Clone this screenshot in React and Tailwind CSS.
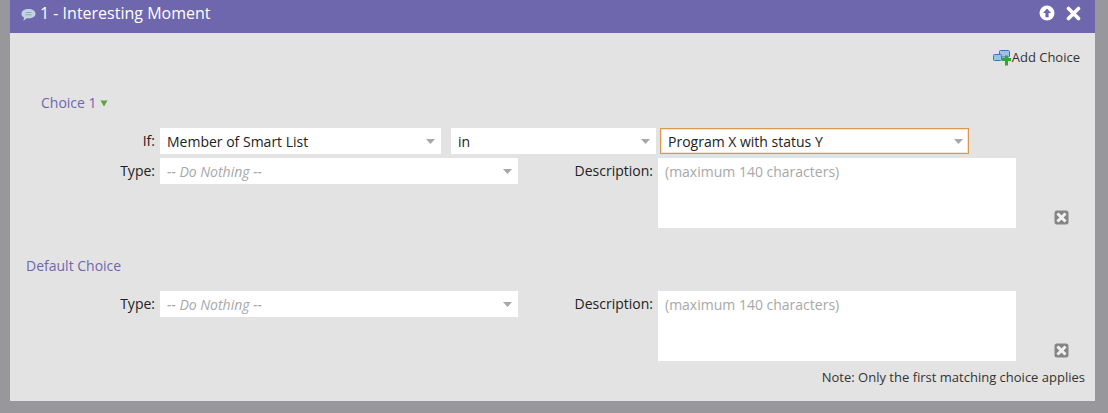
import React from "react";

const font = "font-['Open_Sans','Liberation_Sans',sans-serif]";

const Caret = () => (
  <svg width="9" height="5" viewBox="0 0 9 5" className="shrink-0">
    <path d="M0 0h9L4.500 5z" fill="#a8a8a8" />
  </svg>
);

const Select = ({ value, placeholder, className }) => (
  <div
    className={`flex h-[26px] items-center justify-between bg-white text-sm ${
      placeholder ? "italic text-[#a8a8a8]" : "text-[#222]"
    } ${className}`}
  >
    <span className="pt-[2px]">{value}</span>
    <Caret />
  </div>
);

const DeleteIcon = () => (
  <svg width="15" height="15" viewBox="0 0 15 15">
    <rect x="0.500" y="0.500" width="14" height="14" rx="2.500" fill="#858585" />
    <path
      d="M4.500 4.500l6 6m0-6l-6 6"
      stroke="#f2f2f2"
      strokeWidth="3"
      strokeLinecap="square"
    />
  </svg>
);

const TypeRow = () => (
  <div className="flex">
    <div className="w-[145px] text-right text-sm leading-[26px] text-[#222]">Type:</div>
    <Select
      value="-- Do Nothing --"
      placeholder
      className="ml-[5px] w-[358px] pl-[7px] pr-[6px]"
    />
    <div className="w-[135px] text-right text-sm leading-[26px] text-[#222]">Description:</div>
    <div className="ml-[5px] h-[70px] w-[358px] bg-white px-[7px] pt-[4px] text-sm text-[#a8a8a8]">
      (maximum 140 characters)
    </div>
    <div className="ml-[38px] mb-[3px] flex self-end">
      <DeleteIcon />
    </div>
  </div>
);

export default function App() {
  return (
    <div className={`h-[413px] w-[1108px] overflow-hidden bg-[#98979b] pl-[10px] ${font}`}>
      <div className="h-[401px] w-[1085px] bg-[#e3e3e3]">
        {/* Header */}
        <div className="flex h-[33px] items-center justify-between bg-[#6f67ad] pb-[7px] pl-[11px] pr-[14px] text-white">
          <div className="flex items-center gap-[4px]">
            <svg width="15" height="14" viewBox="0 0 15 14" className="mt-[3px]">
              <path
                d="M7.500 1C11.300 1 14.500 2.900 14.500 5.700S11.300 10.300 7.500 10.300c-.6 0-1.200 0-1.700-.1L2.500 12.800l.5-3.400C1.400 8.600.5 7.300.5 5.700.5 2.900 3.700 1 7.500 1z"
                fill="#c3d3e0"
              />
              <path d="M4.500 4.500h6M4.500 6.800h6" stroke="#93a7b8" strokeWidth="1" />
            </svg>
            <span className="text-base leading-none">1 - Interesting Moment</span>
          </div>
          <div className="flex items-center gap-[11px]">
            <svg width="16" height="16" viewBox="0 0 16 16">
              <circle cx="8" cy="8" r="7.500" fill="#fff" />
              <path d="M8 3.500L12 8H9.600v4.300H6.400V8H4z" fill="#6f67ad" />
            </svg>
            <svg width="15" height="15" viewBox="0 0 15 15">
              <path
                d="M2.500 2.500l10 10m0-10l-10 10"
                stroke="#fff"
                strokeWidth="3.600"
                strokeLinecap="round"
              />
            </svg>
          </div>
        </div>

        {/* Add choice */}
        <div className="mt-[15px] flex h-5 items-center justify-end gap-[1px] pr-[15px] text-[13px] text-[#333]">
          <svg width="18" height="16" viewBox="0 0 18 16">
            <rect x="6.500" y="0.500" width="10" height="6.500" rx="1" fill="#9cc3e6" stroke="#3f77ad" />
            <rect x="0.500" y="4.500" width="8" height="6" rx="1" fill="#9cc3e6" stroke="#3f77ad" />
            <path d="M9 8h3V5.500h3V8h3v3h-3v4.500h-3V11H9z" fill="#3aa335" />
          </svg>
          <span>Add Choice</span>
        </div>

        {/* Choice 1 */}
        <div className="mt-[25px] flex h-5 items-center gap-[3px] pl-[31px] text-sm text-[#6f67ad]">
          <span>Choice 1</span>
          <svg width="8" height="7" viewBox="0 0 8 7">
            <path d="M0.500 0.500h7L4 6.500z" fill="#5fa33c" />
          </svg>
        </div>
        <div className="mt-[15px] flex">
          <div className="w-[145px] text-right text-sm leading-[26px] text-[#222]">If:</div>
          <Select value="Member of Smart List" className="ml-[5px] w-[281px] pl-[7px] pr-[6px]" />
          <Select value="in" className="ml-[10px] w-[205px] pl-[7px] pr-[6px]" />
          <Select
            value="Program X with status Y"
            className="ml-[4px] w-[309px] border border-[#dc9650] pl-[7px] pr-[5px] shadow-[inset_0_0_0_1px_#f6e3d0]"
          />
        </div>
        <div className="mt-[4px]">
          <TypeRow />
        </div>

        {/* Default choice */}
        <div className="mt-[28px] flex h-5 items-center pl-[16px] text-sm text-[#6f67ad]">
          Default Choice
        </div>
        <div className="mt-[15px]">
          <TypeRow />
        </div>

        <div className="mt-[7px] flex h-5 items-center justify-end pr-[10px] text-[13px] text-[#333]">
          Note: Only the first matching choice applies
        </div>
      </div>
    </div>
  );
}
